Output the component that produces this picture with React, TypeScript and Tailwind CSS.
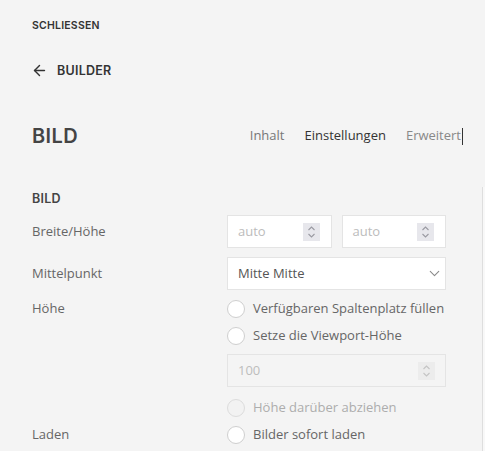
import { ArrowLeft, ChevronDown } from 'lucide-react'

const HEAD = "font-['Inter',sans-serif]"
const BODY = "font-['Open_Sans',sans-serif]"

const Spinner = ({ dim }: { dim?: boolean }) => (
  <span
    className={`flex h-[18px] w-[17px] flex-col items-center justify-center ${dim ? 'bg-[#ececec]' : 'bg-[#e7e7ec]'}`}
  >
    <svg width="9" height="14" viewBox="0 0 9 14" fill="none" stroke={dim ? '#c4c4c4' : '#9a9aa2'} strokeWidth="1.1">
      <path d="M1.5 5 L4.5 2 L7.5 5" />
      <path d="M1.5 9 L4.5 12 L7.5 9" />
    </svg>
  </span>
)

const Radio = ({ label, disabled }: { label: string; disabled?: boolean }) => (
  <div className="flex h-[18px] items-center gap-2">
    <span
      className={`h-[18px] w-[18px] rounded-full border ${disabled ? 'border-[#dcdcdc] bg-[#f2f2f2]' : 'border-[#cfcfcf] bg-white'}`}
    />
    <span className={`text-[13px] ${disabled ? 'text-[#adadad]' : 'text-[#666]'}`}>{label}</span>
  </div>
)

export default function App() {
  return (
    <div className={`flex h-[451px] w-[485px] overflow-hidden bg-[#f4f4f4] ${BODY}`}>
      <div className="flex-1 pl-8 pr-[36px]">
        <div className={`pt-[20px] text-[10.5px] font-semibold leading-[12px] tracking-[0.02em] text-[#333] ${HEAD}`}>
          SCHLIESSEN
        </div>

        <div className={`mt-[30px] flex items-center gap-[9px] text-[#333] ${HEAD}`}>
          <ArrowLeft size={17} strokeWidth={2} className="-ml-px" />
          <span className="text-[12.5px] font-semibold leading-[14px] tracking-[0.02em]">BUILDER</span>
        </div>

        <div className="mt-[45px] flex items-center justify-between">
          <h1 className={`text-[20px] font-semibold leading-[24px] tracking-[0.02em] text-[#444] ${HEAD}`}>BILD</h1>
          <div className="-mr-[17px] flex items-center text-[13px]">
            <span className="text-[#777]">Inhalt</span>
            <span className="ml-[20px] text-[#333]">Einstellungen</span>
            <span className="ml-[20px] text-[#888]">Erweitert</span>
            <span className="ml-px inline-block h-[17px] w-px bg-[#333]" />
          </div>
        </div>

        <div className={`mt-[44px] text-[12.5px] font-semibold leading-[14px] tracking-[0.02em] text-[#444] ${HEAD}`}>
          BILD
        </div>

        <div className="mt-[9px] grid grid-cols-[195px_1fr] text-[13px] text-[#666]">
          <div className="flex h-[33px] items-center">Breite/Höhe</div>
          <div className="flex gap-[10px]">
            {[0, 1].map((i) => (
              <div
                key={i}
                className="flex h-[33px] flex-1 items-center justify-between border border-[#e4e4e4] bg-white pl-[10px] pr-[11px]"
              >
                <span className="text-[#bcbcbc]">auto</span>
                <Spinner />
              </div>
            ))}
          </div>

          <div className="mt-[9px] flex h-[33px] items-center">Mittelpunkt</div>
          <div className="mt-[9px] flex h-[33px] items-center justify-between border border-[#e4e4e4] bg-white pl-[10px] pr-[2px]">
            <span className="text-[#555]">Mitte Mitte</span>
            <ChevronDown size={17} strokeWidth={1.5} className="text-[#8a8a8a]" />
          </div>

          <div className="mt-[10px] flex h-[18px] items-center">Höhe</div>
          <div className="mt-[10px] flex flex-col">
            <Radio label="Verfügbaren Spaltenplatz füllen" />
            <div className="mt-[9px]">
              <Radio label="Setze die Viewport-Höhe" />
            </div>
            <div className="mt-[9px] flex h-[33px] items-center justify-between border border-[#e4e4e4] bg-[#f4f4f4] pl-[10px] pr-[10px]">
              <span className="text-[#bdbdbd]">100</span>
              <Spinner dim />
            </div>
            <div className="mt-[12px]">
              <Radio label="Höhe darüber abziehen" disabled />
            </div>
          </div>

          <div className="mt-[9px] flex h-[18px] items-center">Laden</div>
          <div className="mt-[9px]">
            <Radio label="Bilder sofort laden" />
          </div>
        </div>
      </div>

      <div className="mt-[187px] w-[3px] border-l border-[#dedede] bg-[#f8f8f8]" />
    </div>
  )
}
